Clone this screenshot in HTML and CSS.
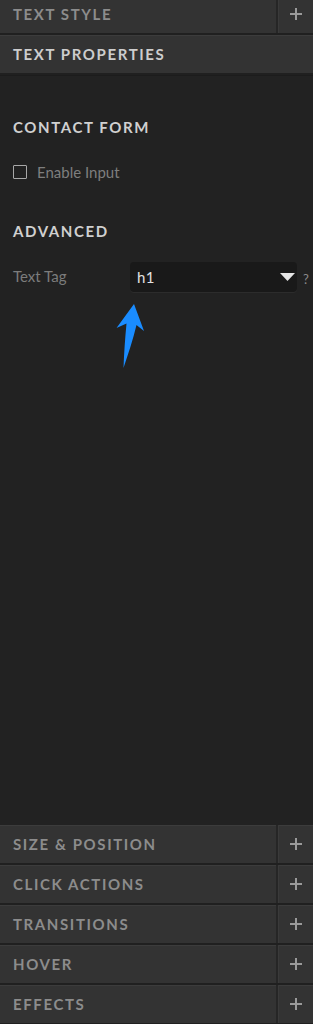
FILE: index.html
```html
<!DOCTYPE html>
<html>
<head>
<meta charset="utf-8">
<link rel="stylesheet" href="styles.css">
</head>
<body>
<div class="panel">
  <div class="hdr first">
    <span class="hdr-title">TEXT STYLE</span>
    <span class="hdr-plus"><svg width="12" height="12" viewBox="0 0 12 12"><path d="M6 0V12M0 6H12" stroke="#9a9a9a" stroke-width="2"/></svg></span>
  </div>
  <div class="hdr open">
    <span class="hdr-title">TEXT PROPERTIES</span>
  </div>
  <div class="body">
    <h3 class="sec sec-contact">CONTACT FORM</h3>
    <label class="check-row"><span class="box"></span><span class="check-label">Enable Input</span></label>
    <h3 class="sec sec-adv">ADVANCED</h3>
    <div class="field-row">
      <span class="field-label">Text Tag</span>
      <div class="select"><span class="select-val">h1</span><svg class="caret" width="15" height="8" viewBox="0 0 15 8"><path d="M0 0H15L7.5 8Z" fill="#e6e6e6"/></svg></div>
      <span class="help">?</span>
    </div>
    <svg class="arrow" width="40" height="70" viewBox="110 298 40 70"><path d="M134 302 L144 329 L136.5 323 C133 338 128 352 123.5 366 C124 352 125 337 126.5 321.5 L116.5 326 Z" fill="#1a8cff"/></svg>
  </div>
  <div class="hdr"><span class="hdr-title">SIZE &amp; POSITION</span><span class="hdr-plus"><svg width="12" height="12" viewBox="0 0 12 12"><path d="M6 0V12M0 6H12" stroke="#9a9a9a" stroke-width="2"/></svg></span></div>
  <div class="hdr"><span class="hdr-title">CLICK ACTIONS</span><span class="hdr-plus"><svg width="12" height="12" viewBox="0 0 12 12"><path d="M6 0V12M0 6H12" stroke="#9a9a9a" stroke-width="2"/></svg></span></div>
  <div class="hdr"><span class="hdr-title">TRANSITIONS</span><span class="hdr-plus"><svg width="12" height="12" viewBox="0 0 12 12"><path d="M6 0V12M0 6H12" stroke="#9a9a9a" stroke-width="2"/></svg></span></div>
  <div class="hdr"><span class="hdr-title">HOVER</span><span class="hdr-plus"><svg width="12" height="12" viewBox="0 0 12 12"><path d="M6 0V12M0 6H12" stroke="#9a9a9a" stroke-width="2"/></svg></span></div>
  <div class="hdr"><span class="hdr-title">EFFECTS</span><span class="hdr-plus"><svg width="12" height="12" viewBox="0 0 12 12"><path d="M6 0V12M0 6H12" stroke="#9a9a9a" stroke-width="2"/></svg></span></div>
</div>
</body>
</html>
```
FILE: styles.css
```css
* { box-sizing: border-box; }
html, body { margin: 0; padding: 0; background: #222222; }
body { font-family: Lato, "Open Sans", sans-serif; width: 313px; height: 1024px; overflow: hidden; }
.panel { display: flex; flex-direction: column; width: 313px; }
.hdr {
  display: flex;
  align-items: stretch;
  height: 40px;
  background: #333333;
  border-bottom: 2px solid #202020;
  box-shadow: inset 0 1px 0 #3c3c3c;
}
.hdr.first { margin-top: -5px; }
.hdr-title {
  flex: 1;
  display: flex;
  align-items: center;
  padding-left: 13px;
  font-size: 15px;
  font-weight: 700;
  letter-spacing: 1.6px;
  color: #8c8c8c;
}
.hdr.open .hdr-title { color: #cdcdcd; }
.hdr-plus {
  width: 37px;
  display: flex;
  align-items: center;
  justify-content: center;
  border-left: 2px solid #262626;
  box-shadow: inset 1px 0 0 #3a3a3a;
}
.body {
  position: relative;
  height: 750px;
  padding: 0 13px;
  background: #222222;
  box-shadow: inset 0 1px 0 #1c1c1c;
}
.sec {
  margin: 0;
  font-size: 15px;
  line-height: 18px;
  font-weight: 700;
  letter-spacing: 1.6px;
  color: #d0d0d0;
}
.sec-contact { margin-top: 43px; }
.check-row { display: flex; align-items: center; gap: 10px; margin-top: 27px; height: 18px; }
.box { width: 14px; height: 14px; border: 1.5px solid #a8a8a8; border-radius: 1px; flex-shrink: 0; }
.check-label { font-size: 15px; color: #7e7e7e; }
.sec-adv { margin-top: 41px; }
.field-row { display: flex; align-items: center; margin-top: 22px; margin-right: -13px; }
.field-label { width: 117px; flex-shrink: 0; font-size: 15px; color: #7c7c7c; margin-top: -2px; }
.select {
  width: 167px;
  flex-shrink: 0;
  height: 30px;
  background: #191919;
  border-radius: 4px;
  display: flex;
  align-items: center;
  justify-content: space-between;
  padding: 0 2px 0 7px;
  box-shadow: 0 1px 0 #2c2c2c;
}
.select-val { font-size: 15px; color: #e2e2e2; letter-spacing: 0.4px; }
.help { margin-left: 6px; font-size: 13px; color: #8a8a8a; margin-top: 4px; }
.arrow { position: absolute; left: 110px; top: 225px; }
```
